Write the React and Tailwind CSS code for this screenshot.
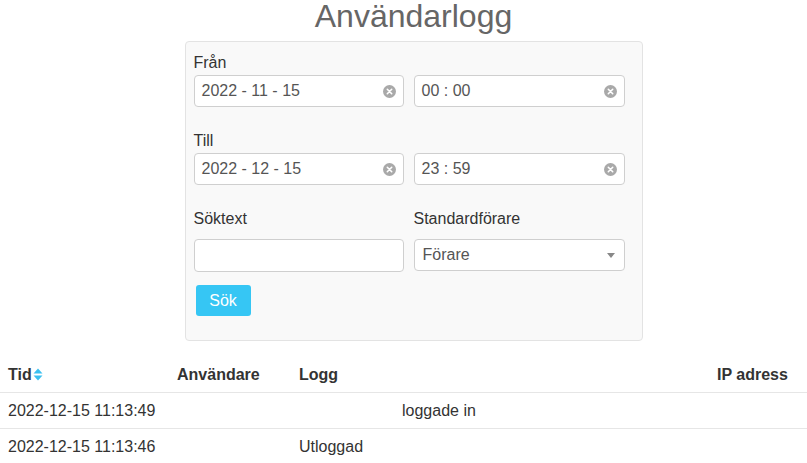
import React from 'react';

const font = { fontFamily: '"Liberation Sans", Arial, sans-serif' };

function ClearIcon() {
    return (
        <svg width="13" height="13" viewBox="0 0 13 13" className="shrink-0">
            <circle cx="6.5" cy="6.5" r="6.5" fill="#a9a9a9" />
            <path d="M4.3 4.3 L8.7 8.7 M8.7 4.3 L4.3 8.7" stroke="#fff" strokeWidth="1.6" strokeLinecap="round" />
        </svg>
    );
}

function PickerInput({ value }) {
    return (
        <div className="h-[32px] flex items-center justify-between bg-white border border-[#cfcfcf] rounded-[4px] pl-[7px] pr-[7px] text-[16px] text-[#555]">
            <span>{value}</span>
            <ClearIcon />
        </div>
    );
}

function SortIcon() {
    return (
        <svg width="10" height="13" viewBox="0 0 10 13" className="inline-block ml-[1px] align-[-1px]">
            <path d="M0.5 5.5 L5 0.5 L9.5 5.5 Z" fill="#3ac0f0" />
            <path d="M0.5 7.5 L5 12.5 L9.5 7.5 Z" fill="#3ac0f0" />
        </svg>
    );
}

export default function App() {
    const rows = [
        { tid: '2022-12-15 11:13:49', user: '', logg: 'loggade in', offset: true },
        { tid: '2022-12-15 11:13:46', user: '', logg: 'Utloggad', offset: false }
    ];

    return (
        <div className="w-[807px] h-[463px] overflow-hidden bg-white text-[#333]" style={font}>
            <div className="pl-[20px] flex flex-col items-center">
                <h1 className="text-[32px] leading-[32px] text-[#666] font-normal">Användarlogg</h1>

                {/* Sökformulär */}
                <div className="mt-[9px] w-[458px] bg-[#f9f9f9] border border-[#e3e3e3] rounded-[4px] pl-[8px] pr-[17px] pt-[11px] pb-[24px]">
                    <div className="text-[16px] leading-[20px] mb-[2px]">Från</div>
                    <div className="grid grid-cols-[210px_211px] gap-x-[10px]">
                        <PickerInput value="2022 - 11 - 15" />
                        <PickerInput value="00 : 00" />
                    </div>

                    <div className="text-[16px] leading-[20px] mt-[24px] mb-[2px]">Till</div>
                    <div className="grid grid-cols-[210px_211px] gap-x-[10px]">
                        <PickerInput value="2022 - 12 - 15" />
                        <PickerInput value="23 : 59" />
                    </div>

                    <div className="grid grid-cols-[210px_211px] gap-x-[10px] mt-[24px]">
                        <div className="text-[16px] leading-[20px]">Söktext</div>
                        <div className="text-[16px] leading-[20px]">Standardförare</div>
                    </div>
                    <div className="grid grid-cols-[210px_211px] gap-x-[10px] mt-[10px] items-start">
                        <div className="h-[33px] bg-white border border-[#cfcfcf] rounded-[4px]" />
                        <div className="h-[32px] flex items-center justify-between bg-white border border-[#cfcfcf] rounded-[4px] pl-[8px] pr-[9px] text-[16px] text-[#555]">
                            <span>Förare</span>
                            <svg width="8" height="5" viewBox="0 0 8 5">
                                <path d="M0 0 L8 0 L4 5 Z" fill="#888" />
                            </svg>
                        </div>
                    </div>

                    <button className="mt-[13px] ml-[2px] w-[55px] h-[31px] rounded-[3px] bg-[#36c6f4] text-white text-[16px] leading-[20px]">
                        Sök
                    </button>
                </div>
            </div>

            {/* Loggtabell */}
            <table className="mt-[16px] w-[807px] table-fixed border-collapse text-[16px]">
                <colgroup>
                    <col className="w-[169px]" />
                    <col className="w-[122px]" />
                    <col className="w-[418px]" />
                    <col />
                </colgroup>
                <thead>
                    <tr className="border-b border-[#e6e6e6]">
                        <th className="text-left font-bold px-[8px] py-[8px] leading-[19px]">
                            Tid<SortIcon />
                        </th>
                        <th className="text-left font-bold px-[8px] py-[8px] leading-[19px]">Användare</th>
                        <th className="text-left font-bold px-[8px] py-[8px] leading-[19px]">Logg</th>
                        <th className="text-left font-bold px-[8px] py-[8px] leading-[19px] whitespace-nowrap">IP adress</th>
                    </tr>
                </thead>
                <tbody>
                    {rows.map((r) => (
                        <tr key={r.tid} className="border-b border-[#e6e6e6]">
                            <td className="px-[8px] py-[8px] leading-[19px] whitespace-nowrap">{r.tid}</td>
                            <td className="px-[8px] py-[8px] leading-[19px]">{r.user}</td>
                            <td className={`py-[8px] leading-[19px] pr-[8px] ${r.offset ? 'pl-[111px]' : 'pl-[8px]'}`}>{r.logg}</td>
                            <td className="px-[8px] py-[8px] leading-[19px]"></td>
                        </tr>
                    ))}
                </tbody>
            </table>
        </div>
    );
}
